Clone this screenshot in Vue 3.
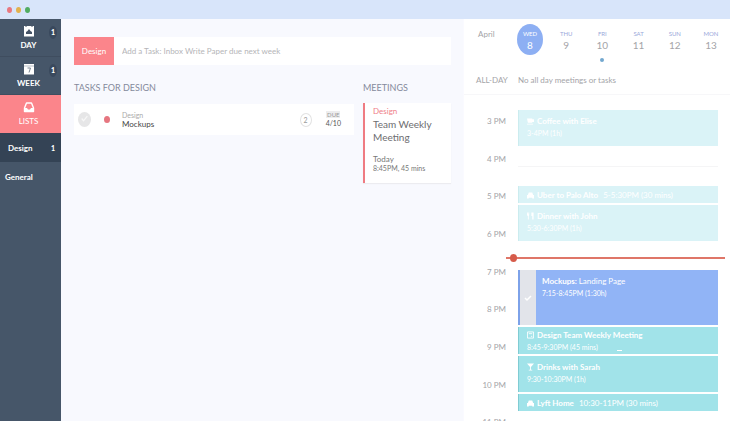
<script setup>
import { ref } from 'vue'

const draft = ref('')
const days = [
  { name: 'WED', date: 8, active: true },
  { name: 'THU', date: 9 },
  { name: 'FRI', date: 10, dot: true },
  { name: 'SAT', date: 11 },
  { name: 'SUN', date: 12 },
  { name: 'MON', date: 13 },
]
const hours = ['3 PM', '4 PM', '5 PM', '6 PM', '7 PM', '8 PM', '9 PM', '10 PM', '11 PM']
</script>

<template>
  <div class="window">
    <header class="titlebar">
      <span class="light red"></span><span class="light amber"></span><span class="light green"></span>
    </header>
    <div class="body">
      <nav class="sidebar">
        <a href="#day" class="nav">
          <svg viewBox="0 0 12 12"><path d="M1 1h10v10.500H1z" fill="#fff" /><path d="M3 0v2M9 0v2" stroke="#465467" /><path d="M3 9V7l1.500-1L6 4l1.500 2L9 7v2z" fill="#465467" /></svg>
          <span>DAY</span><b class="count">1</b>
        </a>
        <a href="#week" class="nav">
          <svg viewBox="0 0 12 12"><path d="M1 1h10v10.500H1z" fill="#fff" /><path d="M1 3h10" stroke="#8b95a3" stroke-width=".6" /><path d="M4.500 5h3L6 9.500" fill="none" stroke="#7b8694" /></svg>
          <span>WEEK</span><b class="count">1</b>
        </a>
        <a href="#lists" class="nav selected">
          <svg viewBox="0 0 12 12"><path d="M3.500 2h5L10.500 7v3.500h-9V7z" fill="none" stroke="#fff" stroke-width="1.400" stroke-linejoin="round" /><path d="M1.500 7h2.500l1 1.500h2L8 7h2.500v3.500h-9z" fill="#fff" /></svg>
          <span>LISTS</span>
        </a>
        <a href="#design" class="sub current">Design<b>1</b></a>
        <a href="#general" class="sub">General</a>
      </nav>

      <main class="main">
        <form class="add" @submit.prevent>
          <button type="button">Design</button>
          <input v-model="draft" aria-label="Add a task" placeholder="Add a Task: Inbox Write Paper due next week">
        </form>
        <div class="columns">
          <section class="tasks">
            <h2>TASKS FOR DESIGN</h2>
            <article class="task">
              <label class="tick">
                <input type="checkbox" aria-label="Complete Mockups">
                <svg viewBox="0 0 14 14"><path d="M4 7l2 2.500L10 4.500" fill="none" stroke="#f7f7f7" stroke-width="1.400" /></svg>
              </label>
              <span class="bullet"></span>
              <div class="name"><small>Design</small><span>Mockups</span></div>
              <span class="hours">2</span>
              <div class="due"><small>DUE</small><span>4/10</span></div>
            </article>
          </section>
          <section class="meetings">
            <h2>MEETINGS</h2>
            <article class="meeting">
              <span class="tag">Design</span>
              <h3>Team Weekly Meeting</h3>
              <p>Today</p>
              <p class="when">8:45PM, 45 mins</p>
            </article>
          </section>
        </div>
      </main>

      <aside class="calendar">
        <div class="week">
          <span class="month">April</span>
          <div class="days">
            <button v-for="d in days" :key="d.date" type="button" class="day" :class="{ active: d.active, dot: d.dot }">
              <small>{{ d.name }}</small><span>{{ d.date }}</span>
            </button>
          </div>
        </div>
        <div class="allday"><span>ALL-DAY</span><p>No all day meetings or tasks</p></div>
        <div class="schedule">
          <div class="scale"><span v-for="h in hours" :key="h">{{ h }}</span></div>
          <div class="events">
            <article class="event past tall">
              <h4><svg viewBox="0 0 8 8"><path d="M0 1h6v1h2v3H6v1H1zM0 7h7v1H0z" /></svg>Coffee with Elise</h4>
              <p>3-4PM (1h)</p>
            </article>
            <div class="free"></div>
            <article class="event past short">
              <h4><svg viewBox="0 0 8 8"><path d="M2 1h4l1 3h1v4H6V7H2v1H0V4h1z" /></svg>Uber to Palo Alto</h4><p>5-5:30PM (30 mins)</p>
            </article>
            <article class="event past tall">
              <h4><svg viewBox="0 0 8 8"><path d="M0 0h1v2h.500V0h1v3l-.500 1v4H1V4L0 3zM5 0h2.500v8H6V4H5z" /></svg>Dinner with John</h4>
              <p>5:30-6:30PM (1h)</p>
            </article>
            <div class="now"></div>
            <article class="event focus">
              <div class="done"><svg viewBox="0 0 8 8"><path d="M1 4l2 2 4-4" fill="none" stroke="#fff" stroke-width="1.500" /></svg></div>
              <div class="text"><h4>Mockups:&nbsp;<span>Landing Page</span></h4><p>7:15-8:45PM (1:30h)</p></div>
            </article>
            <article class="event medium">
              <h4><svg viewBox="0 0 8 8"><path d="M.500.500h7v7h-7zM2 2.500h4M4.500 5.500h1.500" fill="none" stroke="#fff" /></svg>Design Team Weekly Meeting</h4>
              <p>8:45-9:30PM (45 mins)</p>
              <span class="handle"></span>
            </article>
            <article class="event tall">
              <h4><svg viewBox="0 0 8 8"><path d="M0 0h8L4.500 4v3H6v1H2V7h1.500V4z" /></svg>Drinks with Sarah</h4>
              <p>9:30-10:30PM (1h)</p>
            </article>
            <article class="event short">
              <h4><svg viewBox="0 0 8 8"><path d="M2 1h4l1 3h1v4H6V7H2v1H0V4h1z" /></svg>Lyft Home</h4><p>10:30-11PM (30 mins)</p>
            </article>
          </div>
        </div>
      </aside>
    </div>
  </div>
</template>

<style>
body { margin: 0; background: #fff; }
</style>

<style scoped>
* { box-sizing: border-box; }
h2, h3, h4, p { margin: 0; font-weight: 400; }
button, input { font: inherit; border: 0; padding: 0; margin: 0; background: none; }
a { color: inherit; text-decoration: none; }
.window { height: 100vh; display: flex; flex-direction: column; overflow: hidden; font: 8px/10px Lato, sans-serif; color: #777; }
.titlebar { flex: 0 0 19px; display: flex; align-items: center; gap: 4px; padding-left: 7px; background: #d8e5fa; }
.light { width: 5px; height: 6px; border-radius: 50%; }
.red { background: #e87880; }
.amber { background: #e2b14d; }
.green { background: #51ac61; }
.body { flex: 1; min-height: 0; display: flex; border-bottom: 1px solid #fff; }

.sidebar { flex: 0 0 61px; background: #465669; color: #fff; font-weight: 700; }
.nav { position: relative; height: 38px; display: flex; flex-direction: column; align-items: center; padding: 6px 4px 0 0; gap: 3px; border-bottom: 1px solid #3f4d5f; }
.nav svg { width: 12px; height: 12px; }
.nav.selected { background: #fb858b; border-color: #fb858b; font-weight: 400; }
.count { position: absolute; right: 4px; top: 7px; width: 8px; height: 13px; line-height: 13px; text-align: center; border-radius: 50%; background: #3a495d; font-size: 7px; }
.sub { height: 29px; display: flex; align-items: center; justify-content: space-between; padding: 0 6px 0 5px; }
.sub.current { background: #344355; padding-left: 8px; }
.sub b { font-size: 7px; }

.main { flex: 1; min-width: 0; background: #f8f9fe; padding: 18px 12px 0 13px; }
.add { display: flex; height: 28px; background: #fff; }
.add button { flex: 0 0 40px; background: #fb858b; color: #fff; }
.add input { flex: 1; min-width: 0; padding: 0 8px; outline: 0; color: #777; }
.add input::placeholder { color: #b5b5b8; opacity: 1; }
.columns { display: flex; gap: 9px; margin-top: 17px; }
h2 { font-size: 9px; line-height: 12px; color: #858a9c; }
.tasks { flex: 1; min-width: 0; }
.task { display: flex; align-items: center; height: 31px; margin-top: 10px; padding: 0 13px 0 4px; background: #fff; }
.tick { position: relative; display: flex; }
.tick input { appearance: none; width: 13px; height: 15px; border-radius: 50%; background: #e6e6e7; }
.tick svg { position: absolute; inset: 0; pointer-events: none; }
.bullet { width: 6px; height: 7px; border-radius: 50%; background: #e67680; margin: 0 12px 0 13px; }
.name { flex: 1; display: flex; flex-direction: column; color: #444; }
.name small { color: #aaa; font-size: 7px; line-height: 8px; }
.hours { width: 12px; height: 14px; line-height: 12px; border: 1px solid #e2e2e2; border-radius: 50%; text-align: center; font-size: 7px; color: #999; }
.due { display: flex; flex-direction: column; align-items: center; margin-left: 14px; font-size: 7px; color: #555; }
.due small { width: 14px; text-align: center; font-size: 6px; line-height: 7px; background: #ededee; color: #999; }
.meetings { flex: 0 0 88px; }
.meeting { margin-top: 9px; padding: 4px 8px 11px; background: #fff; border-left: 2px solid #ef7b82; box-shadow: 0 1px 1px #ececf0; }
.tag { display: block; color: #ef8088; line-height: 8px; }
h3 { font-size: 10px; line-height: 13px; margin: 3px 0 10px; color: #6d6d70; }
.when { font-size: 7px; line-height: 8px; }

.calendar { flex: 0 0 267px; overflow: hidden; border-left: 1px solid #fafaff; background: #fff; color: #a4a4a8; }
.week { display: flex; height: 50px; padding: 5px 6px 0 14px; }
.month { flex: 0 0 39px; padding-top: 5px; }
.days { flex: 1; display: flex; justify-content: space-between; }
.day { position: relative; width: 26px; height: 31px; border-radius: 50%; color: #a4a4a8; display: flex; flex-direction: column; align-items: center; padding-top: 5px; }
.day small { font-size: 6px; line-height: 10px; color: #9aa8da; }
.day span { font-size: 10px; line-height: 12px; }
.day.active { background: #8daff3; color: #fff; }
.day.active small { color: #fff; }
.day.dot::after { content: ''; position: absolute; top: 34px; width: 4px; height: 4px; border-radius: 50%; background: #73a8cf; }
.allday { display: flex; height: 26px; padding: 6px 0 0 12px; border-bottom: 1px solid #f7f7f9; }
.allday span { flex: 0 0 42px; }
.schedule { display: flex; padding-top: 7px; }
.scale { flex: 0 0 54px; height: 339px; display: flex; flex-direction: column; margin-top: 8px; padding-right: 12px; text-align: right; }
.scale span { flex: 1; padding-top: 6px; }
.events { flex: 1; min-width: 0; padding: 8px 12px 0 0; display: flex; flex-direction: column; gap: 2px; }
.event { position: relative; flex: none; padding: 6px 8px 0; background: #a1e3e9; border-left: 1px solid #80ccd3; color: #fff; }
.event h4 { display: flex; align-items: center; font-weight: 700; }
.event h4 svg { width: 7px; height: 8px; fill: #fff; margin-right: 3px; }
.event h4 span { font-weight: 400; }
.event p { margin-top: 2px; font-size: 7px; }
.past { background: #daf3f7; border-color: #cbecef; }
.tall { height: 36px; }
.medium { height: 27px; padding-top: 3px; }
.short { height: 17px; display: flex; align-items: center; gap: 5px; padding-top: 0; }
.event.short p { margin: 0; font-size: 8px; }
.free { height: 36px; display: flex; align-items: center; }
.free::before { content: ''; height: 1px; flex: 1; background: #f5f5f6; }
.now { position: relative; height: 2px; margin: 14px -7px 9px -12px; background: #df7668; }
.now::before { content: ''; position: absolute; left: 4px; top: -3px; width: 7px; height: 8px; border-radius: 50%; background: #d65b4a; }
.event.focus { display: flex; height: 55px; padding: 0; background: #91b4f6; border-left: 2px solid #7da2e9; }
.done { flex: 0 0 16px; background: #e2e4ea; display: flex; align-items: center; justify-content: center; }
.done svg { width: 8px; height: 10px; }
.text { padding: 6px; }
.handle { position: absolute; left: 98px; bottom: 3px; width: 5px; height: 1px; background: #fff; }
</style>
